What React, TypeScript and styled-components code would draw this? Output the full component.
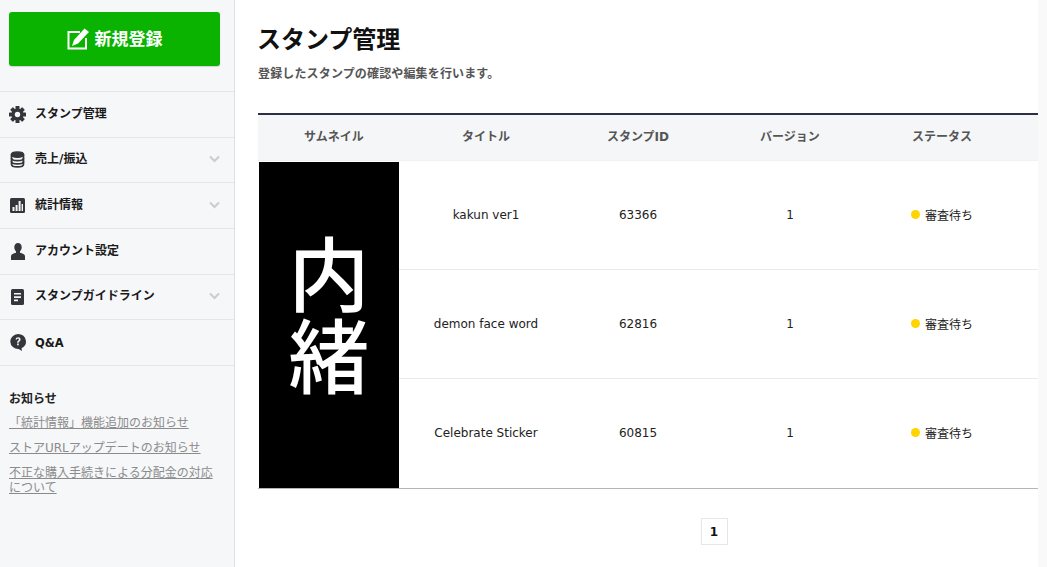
import React, { FC } from "react";
import styled, { createGlobalStyle } from "styled-components";

const GlobalStyle = createGlobalStyle`
  html, body {
    margin: 0;
    padding: 0;
    height: 567px;
    overflow: hidden;
    background: #fff;
    font-family: "DejaVu Sans", "Noto Sans CJK JP", sans-serif;
    color: #111;
  }
  * { box-sizing: border-box; }
`;

const Page = styled.div`
  display: flex;
  width: 1047px;
  height: 567px;
`;

const Sidebar = styled.aside`
  width: 235px;
  flex: none;
  background: #f6f7f9;
  border-right: 1px solid #dcdfe3;
  padding-top: 12px;
`;

const RegisterButton = styled.a`
  display: flex;
  align-items: center;
  justify-content: center;
  gap: 6px;
  width: 211px;
  height: 54px;
  margin: 0 0 25px 9px;
  border-radius: 3px;
  background: #0ab300;
  box-shadow: 0 1px 1px rgba(0, 0, 0, 0.15);
  color: #fff;
  font-size: 17px;
  font-weight: 700;
`;

const RegisterLabel = styled.span`
  padding-bottom: 3px;
`;

const Menu = styled.ul`
  list-style: none;
  margin: 0;
  padding: 0;
  border-top: 1px solid #e4e6e9;
`;

const MenuItem = styled.li`
  display: flex;
  align-items: center;
  height: 45.67px;
  padding: 0 14px 0 9px;
  border-bottom: 1px solid #e4e6e9;
  font-size: 12px;
  font-weight: 700;
  color: #1a1a1a;
`;

const MenuIcon = styled.span`
  display: flex;
  justify-content: center;
  width: 17px;
  margin-right: 9px;
`;

const MenuLabel = styled.span<{ $latin?: boolean }>`
  flex: 1;
  padding-bottom: ${({ $latin }) => ($latin ? "0" : "4px")};
  font-size: ${({ $latin }) => ($latin ? "11.5px" : "12px")};
`;

const Notices = styled.section`
  padding: 25px 15px 0 9px;
`;

const NoticeTitle = styled.h3`
  margin: 0 0 9px;
  font-size: 12px;
  line-height: 16px;
  font-weight: 700;
  color: #222;
`;

const NoticeLink = styled.a`
  display: block;
  margin-bottom: 10px;
  font-size: 12px;
  line-height: 15px;
  color: #8b8b8b;
  text-decoration: underline;
`;

const Main = styled.main`
  flex: none;
  width: 803px;
  padding: 24px 0 0 23px;
`;

const Title = styled.h1`
  margin: 0 0 10px -1px;
  font-size: 24px;
  line-height: 32px;
  font-weight: 700;
  color: #111;
`;

const Lead = styled.p`
  margin: 0 0 30px;
  font-size: 12px;
  line-height: 17px;
  font-weight: 700;
  letter-spacing: 0.15px;
  color: #555;
`;

const Table = styled.div`
  display: grid;
  grid-template-columns: repeat(5, 152px) 20px;
  grid-template-rows: 46px repeat(3, 109px);
  width: 780px;
  border-top: 2px solid #2b3048;
  border-bottom: 1px solid #b5b5b5;
`;

const HeadCell = styled.div`
  display: flex;
  align-items: center;
  justify-content: center;
  padding-bottom: 4px;
  background: #f5f6f8;
  border-bottom: 1px solid #f0f1f3;
  font-size: 12px;
  font-weight: 700;
  color: #555;
`;

const Thumbnail = styled.div`
  grid-row: 2 / span 3;
  width: 140px;
  margin: 1px 0 0 1px;
  padding-bottom: 28px;
  display: flex;
  align-items: center;
  justify-content: center;
  background: #000;
`;

const ThumbnailText = styled.span`
  width: 1em;
  color: #fff;
  font-family: "Noto Sans CJK JP", sans-serif;
  font-size: 81px;
  font-weight: 500;
  line-height: 82px;
`;

const Row = styled.div<{ $last?: boolean }>`
  grid-column: 2 / -1;
  display: grid;
  grid-template-columns: subgrid;
  margin-left: -11px;
  padding-left: 11px;
  border-bottom: 1px solid ${({ $last }) => ($last ? "transparent" : "#e9eaec")};
`;

const Cell = styled.div`
  display: flex;
  align-items: center;
  justify-content: center;
  gap: 5px;
  font-size: 12px;
  color: #222;
`;

const StatusDot = styled.span`
  width: 9px;
  height: 9px;
  margin-top: -2px;
  border-radius: 50%;
  background: #ffd400;
`;

const StatusLabel = styled.span`
  padding-bottom: 2px;
`;

const Pagination = styled.div`
  display: flex;
  justify-content: center;
  width: 780px;
  margin-top: 29px;
  padding-left: 132px;
`;

const PageNumber = styled.span`
  display: flex;
  align-items: center;
  justify-content: center;
  width: 27px;
  height: 27px;
  border: 1px solid #e6e6e6;
  font-size: 12px;
  font-weight: 700;
  color: #111;
`;

const Gutter = styled.div`
  flex: 1;
  background: #f9f9f9;
`;

const ICON = "#33363b";

const EditIcon = () => (
  <svg width="22" height="22" viewBox="0 0 22 22">
    <path d="M13 4H1.500v16.500H19V10" fill="none" stroke="#fff" strokeWidth="2" />
    <path d="M17.500 .5L22 4 11 15.500 5 18l2-6z" fill="#fff" />
  </svg>
);

const GearIcon = () => (
  <svg width="17" height="17" viewBox="0 0 17 17">
    <g fill={ICON}>
      <circle cx="8.5" cy="8.5" r="6" />
      {[0, 45, 90, 135].map((a) => (
        <rect key={a} x="6.5" y="0" width="4" height="17" rx="0.6" transform={`rotate(${a} 8.5 8.5)`} />
      ))}
    </g>
    <circle cx="8.5" cy="8.5" r="2.7" fill="#f6f7f9" />
  </svg>
);

const DatabaseIcon = () => (
  <svg width="15" height="17" viewBox="0 0 15 17" fill="none" stroke={ICON} strokeWidth="1.7">
    <ellipse cx="7.5" cy="3.6" rx="6" ry="2.6" fill={ICON} />
    <path d="M1.5 3.6v9.6c0 1.5 2.7 2.7 6 2.7s6-1.2 6-2.7V3.6" />
    <path d="M1.5 7c0 1.5 2.7 2.7 6 2.7s6-1.2 6-2.7M1.5 10.2c0 1.5 2.7 2.7 6 2.7s6-1.2 6-2.7" />
  </svg>
);

const ChartIcon = () => (
  <svg width="15" height="15" viewBox="0 0 15 15">
    <rect width="15" height="15" rx="1.5" fill={ICON} />
    <path d="M2.5 9h2v4h-2zM5.6 7h2v6h-2zM8.6 3h2v10h-2zM11.6 6h1.4v7h-1.4z" fill="#f6f7f9" />
  </svg>
);

const PersonIcon = () => (
  <svg width="14" height="17" viewBox="0 0 14 17">
    <path
      d="M7 0c2.3 0 3.7 1.8 3.7 4.2 0 1.7-.7 3.2-1.7 4.2v1.4c2.5.8 5 1.6 5 3.4V17H0v-3.8c0-1.8 2.5-2.6 5-3.4V8.4C4 7.4 3.300 5.900 3.300 4.200 3.300 1.800 4.700 0 7 0z"
      fill={ICON}
    />
  </svg>
);

const GuideIcon = () => (
  <svg width="13" height="16" viewBox="0 0 13 16">
    <rect width="13" height="16" rx="1.5" fill={ICON} />
    <path d="M3 4h7v1.600H3zM3 7.300h7v1.600H3zM3 10.600h4v1.600H3z" fill="#f6f7f9" />
  </svg>
);

const QuestionIcon = () => (
  <svg width="16" height="17" viewBox="0 0 16 17">
    <path d="M8 0a8 7.500 0 0 1 3.500 14.200L12 17l-3.400-2A8 7.500 0 1 1 8 0z" fill={ICON} />
    <path d="M5.600 5.600C5.700 4 6.800 3.200 8.100 3.200c1.500 0 2.500.9 2.500 2.200 0 1.800-1.900 1.900-1.900 3.400H7.100c0-2.200 1.800-2.300 1.800-3.400 0-.5-.3-.9-.9-.9-.6 0-.9.4-1 1.100zM7.100 9.600h1.700v1.600H7.100z" fill="#f6f7f9" />
  </svg>
);

const ChevronIcon = styled.svg`
  margin-bottom: 2px;
`;

const Chevron = () => (
  <ChevronIcon width="11" height="8" viewBox="0 0 11 8" fill="none" stroke="#c9ccd0" strokeWidth="2">
    <path d="M1 1.500l4.500 4.500 4.500-4.500" />
  </ChevronIcon>
);

const menu = [
  { label: "スタンプ管理", icon: <GearIcon /> },
  { label: "売上/振込", icon: <DatabaseIcon />, more: true },
  { label: "統計情報", icon: <ChartIcon />, more: true },
  { label: "アカウント設定", icon: <PersonIcon /> },
  { label: "スタンプガイドライン", icon: <GuideIcon />, more: true },
  { label: "Q&A", icon: <QuestionIcon />, latin: true },
];

const stamps = [
  { title: "kakun ver1", id: "63366" },
  { title: "demon face word", id: "62816" },
  { title: "Celebrate Sticker", id: "60815" },
];

export const App: FC = () => (
  <Page>
    <GlobalStyle />
    <Sidebar>
      <RegisterButton>
        <EditIcon />
        <RegisterLabel>新規登録</RegisterLabel>
      </RegisterButton>
      <Menu>
        {menu.map((item) => (
          <MenuItem key={item.label}>
            <MenuIcon>{item.icon}</MenuIcon>
            <MenuLabel $latin={item.latin}>{item.label}</MenuLabel>
            {item.more && <Chevron />}
          </MenuItem>
        ))}
      </Menu>
      <Notices>
        <NoticeTitle>お知らせ</NoticeTitle>
        <NoticeLink>「統計情報」機能追加のお知らせ</NoticeLink>
        <NoticeLink>ストアURLアップデートのお知らせ</NoticeLink>
        <NoticeLink>不正な購入手続きによる分配金の対応について</NoticeLink>
      </Notices>
    </Sidebar>
    <Main>
      <Title>スタンプ管理</Title>
      <Lead>登録したスタンプの確認や編集を行います。</Lead>
      <Table>
        <HeadCell>サムネイル</HeadCell>
        <HeadCell>タイトル</HeadCell>
        <HeadCell>スタンプID</HeadCell>
        <HeadCell>バージョン</HeadCell>
        <HeadCell>ステータス</HeadCell>
        <HeadCell />
        <Thumbnail>
          <ThumbnailText>内緒</ThumbnailText>
        </Thumbnail>
        {stamps.map((stamp, i) => (
          <Row key={stamp.id} $last={i === stamps.length - 1}>
            <Cell>{stamp.title}</Cell>
            <Cell>{stamp.id}</Cell>
            <Cell>1</Cell>
            <Cell>
              <StatusDot />
              <StatusLabel>審査待ち</StatusLabel>
            </Cell>
            <Cell />
          </Row>
        ))}
      </Table>
      <Pagination>
        <PageNumber>1</PageNumber>
      </Pagination>
    </Main>
    <Gutter />
  </Page>
);

export default App;
